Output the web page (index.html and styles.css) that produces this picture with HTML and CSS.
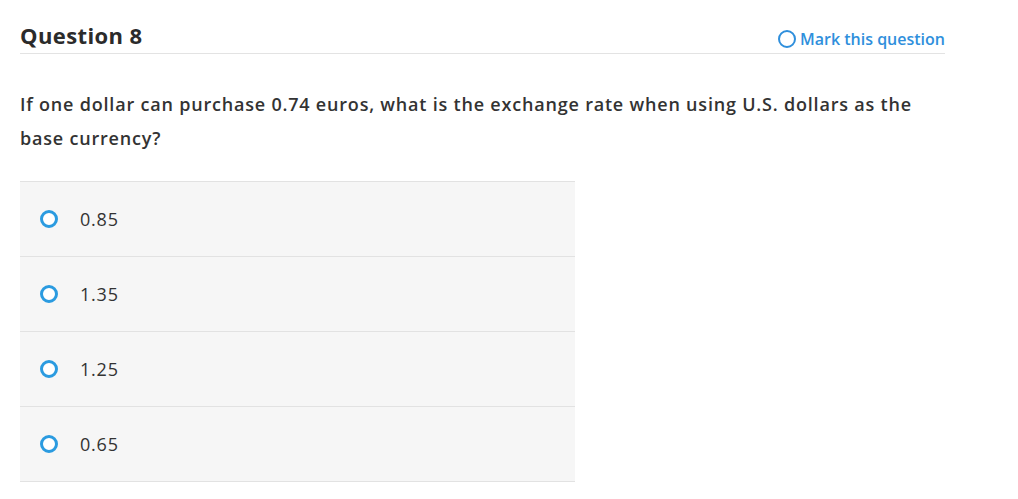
FILE: index.html
```html
<!DOCTYPE html>
<html>
<head>
<meta charset="utf-8">
<link rel="stylesheet" href="styles.css">
</head>
<body>
<div class="page">
  <div class="header">
    <h2 class="title">Question 8</h2>
    <a class="mark"><span class="mark-circle"></span>Mark this question</a>
  </div>
  <p class="prompt">If one dollar can purchase 0.74 euros, what is the exchange rate when using U.S. dollars as the base currency?</p>
  <ul class="options">
    <li class="option"><span class="radio"></span><span class="label">0.85</span></li>
    <li class="option"><span class="radio"></span><span class="label">1.35</span></li>
    <li class="option"><span class="radio"></span><span class="label">1.25</span></li>
    <li class="option"><span class="radio"></span><span class="label">0.65</span></li>
  </ul>
</div>
</body>
</html>
```
FILE: styles.css
```css
html, body {
  margin: 0;
  padding: 0;
  background: #fff;
}
body {
  font-family: "Open Sans", Lato, sans-serif;
  color: #333;
}
.page {
  padding: 20px 73px 0 20px;
}
.header {
  display: flex;
  justify-content: space-between;
  align-items: flex-end;
  border-bottom: 1px solid #e3e3e3;
  height: 33px;
}
.title {
  margin: 0;
  font-size: 22px;
  font-weight: 700;
  letter-spacing: 0.4px;
  color: #2b2b2b;
  line-height: 30px;
  margin-bottom: 3px;
}
.mark {
  display: flex;
  align-items: center;
  gap: 4px;
  color: #2f8fdc;
  font-size: 16px;
  font-weight: 600;
  line-height: 20px;
  margin-bottom: 4px;
}
.mark-circle {
  width: 14px;
  height: 14px;
  border: 2px solid #2f8fdc;
  border-radius: 50%;
}
.prompt {
  margin: 33px 0 0 0;
  font-size: 18px;
  font-weight: 600;
  letter-spacing: 0.8px;
  line-height: 34px;
  color: #333;
}
.options {
  list-style: none;
  margin: 26px 0 0 0;
  padding: 0;
  width: 555px;
  border-top: 1px solid #e2e2e2;
}
.option {
  display: flex;
  align-items: center;
  height: 74px;
  background: #f6f6f6;
  border-bottom: 1px solid #e2e2e2;
  padding-left: 20px;
}
.radio {
  width: 12px;
  height: 12px;
  border: 3px solid #2b9be0;
  border-radius: 50%;
  background: #fff;
}
.label {
  margin-left: 22px;
  font-size: 18px;
  letter-spacing: 0.8px;
  color: #333;
}
```
